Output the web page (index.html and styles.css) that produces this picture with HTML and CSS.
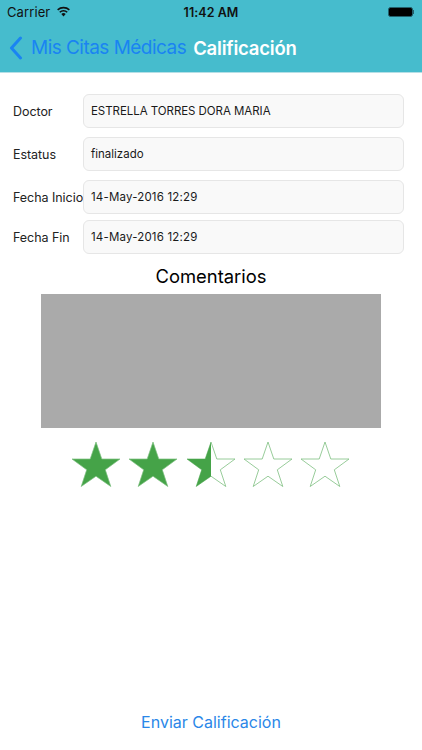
FILE: index.html
```html
<!DOCTYPE html>
<html lang="es">
<head>
<meta charset="utf-8">
<title>Calificación</title>
<link rel="stylesheet" href="styles.css">
</head>
<body>
<div class="app">
  <header class="header">
    <div class="status">
      <div class="status-left">
        <span>Carrier</span>
        <svg class="wifi" viewBox="0 0 16 12" width="15" height="11"><path d="M8 11.5 5.6 8.7a3.6 3.6 0 0 1 4.8 0Z" fill="#111"/><path d="M3.9 6.8a6.2 6.2 0 0 1 8.2 0M1.6 4.2a9.6 9.6 0 0 1 12.8 0" fill="none" stroke="#111" stroke-width="1.7"/></svg>
      </div>
      <span class="time">11:42 AM</span>
      <div class="status-right">
        <span class="battery"></span><span class="battery-tip"></span>
      </div>
    </div>
    <nav class="nav">
      <svg class="chevron" viewBox="0 0 14 24" width="14" height="24"><path d="M11.5 2 2.5 12l9 10" fill="none" stroke="#1a84f2" stroke-width="3" stroke-linecap="round" stroke-linejoin="round"/></svg>
      <span class="back">Mis Citas Médicas</span>
      <span class="title">Calificación</span>
    </nav>
  </header>
  <main class="content">
    <div class="rows">
      <div class="row r1"><span class="label">Doctor</span><div class="field field-name">ESTRELLA TORRES DORA MARIA</div></div>
      <div class="row r2"><span class="label">Estatus</span><div class="field">finalizado</div></div>
      <div class="row r3"><span class="label">Fecha Inicio</span><div class="field field-date">14-May-2016 12:29</div></div>
      <div class="row r4"><span class="label">Fecha Fin</span><div class="field field-date">14-May-2016 12:29</div></div>
    </div>
    <h2 class="heading">Comentarios</h2>
    <div class="comment"></div>
    <div class="stars">
      <svg class="star" viewBox="0 0 50 46" width="50" height="46"><polygon points="25,1 30.8,18 49,18 34.3,28.8 39.8,45.5 25,35.2 10.2,45.5 15.7,28.8 1,18 19.2,18" fill="#45a348" stroke="#7dbf80" stroke-width=".7"/></svg>
      <svg class="star" viewBox="0 0 50 46" width="50" height="46"><polygon points="25,1 30.8,18 49,18 34.3,28.8 39.8,45.5 25,35.2 10.2,45.5 15.7,28.8 1,18 19.2,18" fill="#45a348" stroke="#7dbf80" stroke-width=".7"/></svg>
      <svg class="star" viewBox="0 0 50 46" width="50" height="46"><polygon points="25,1 30.8,18 49,18 34.3,28.8 39.8,45.5 25,35.2 10.2,45.5 15.7,28.8 1,18 19.2,18" fill="#fff" stroke="#7dbf80" stroke-width=".8"/><polygon points="25,1 25,35.2 10.2,45.5 15.7,28.8 1,18 19.2,18" fill="#45a348"/></svg>
      <svg class="star" viewBox="0 0 50 46" width="50" height="46"><polygon points="25,1 30.8,18 49,18 34.3,28.8 39.8,45.5 25,35.2 10.2,45.5 15.7,28.8 1,18 19.2,18" fill="#fff" stroke="#7dbf80" stroke-width=".8"/></svg>
      <svg class="star" viewBox="0 0 50 46" width="50" height="46"><polygon points="25,1 30.8,18 49,18 34.3,28.8 39.8,45.5 25,35.2 10.2,45.5 15.7,28.8 1,18 19.2,18" fill="#fff" stroke="#7dbf80" stroke-width=".8"/></svg>
    </div>
    <div class="submit">Enviar Calificación</div>
  </main>
</div>
</body>
</html>
```
FILE: styles.css
```css
* { box-sizing: border-box; }
html, body { margin: 0; padding: 0; }
body { font-family: Inter, "Liberation Sans", sans-serif; background: #fff; color: #111; }
.app { width: 422px; height: 750px; display: flex; flex-direction: column; overflow: hidden; }

.header { height: 73px; background: #46bccd; border-bottom: 1px solid #b5dfe6; flex: none; }
.status { height: 20px; padding: 4px 7px 0; display: grid; grid-template-columns: 1fr auto 1fr; align-items: center; color: #111; }
.status-left { display: flex; align-items: center; gap: 6px; font-size: 13px; letter-spacing: .1px; }
.wifi { margin-top: -2px; }
.time { font-weight: 600; font-size: 12.5px; letter-spacing: .05px; }
.status-right { display: flex; align-items: center; justify-content: flex-end; margin-top: -1px; }
.battery { width: 25px; height: 10px; background: #000; border: 1px solid #24606c; border-radius: 2.5px; }
.battery-tip { width: 1.5px; height: 4px; background: #24606c; margin-right: 1px; }

.nav { height: 52px; display: flex; align-items: center; padding: 3px 0 0 9px; }
.chevron { flex: none; margin-right: 8px; }
.back { font-size: 19px; color: #1a84f2; letter-spacing: -.53px; white-space: nowrap; }
.title { font-size: 18.5px; font-weight: 600; color: #fff; margin-left: 7px; letter-spacing: -.2px; white-space: nowrap; }

.content { flex: 1; display: flex; flex-direction: column; }
.rows { padding: 21px 18px 0 13px; display: flex; flex-direction: column; }
.row { display: grid; grid-template-columns: 71px 1fr; align-items: center; height: 34px; }
.r2, .r3 { margin-top: 9px; }
.r4 { margin-top: 6px; }
.label { font-size: 12.5px; color: #222; white-space: nowrap; letter-spacing: -.05px; }
.field { height: 100%; margin-left: -1px; background: #f9f9f9; border: 1px solid #e6e6e6; border-radius: 6px; padding: 0 7px; display: flex; align-items: center; font-size: 11.5px; color: #1a1a1a; white-space: nowrap; }
.field-name { letter-spacing: -.05px; }
.field-date { letter-spacing: .18px; }

.heading { margin: 10px 0 0; font-size: 18.4px; line-height: 24px; font-weight: 400; color: #000; text-align: center; }
.comment { width: 340px; height: 134px; margin: 6px 0 0 41px; background: #aaa; }
.stars { display: flex; gap: 7.3px; margin: 13px 0 0 71px; }
.star { flex: none; display: block; }
.submit { margin-top: auto; padding-bottom: 18px; font-size: 16px; line-height: 20px; text-align: center; color: #2a87e8; }
```
